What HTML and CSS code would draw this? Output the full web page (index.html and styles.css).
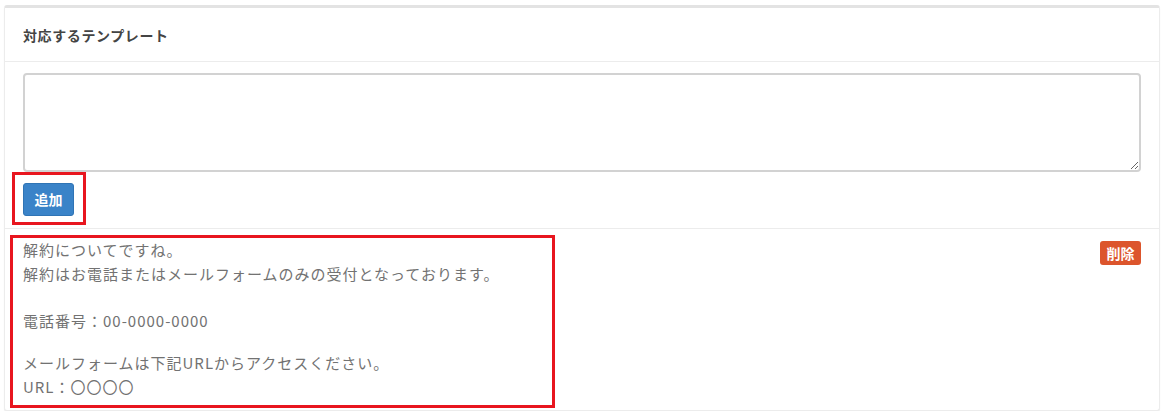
FILE: index.html
```html
<!DOCTYPE html>
<html lang="ja">
<head>
<meta charset="utf-8">
<title>対応するテンプレート</title>
<link rel="stylesheet" href="styles.css">
</head>
<body>
<div class="box">
  <div class="box-header">
    <h3 class="box-title">対応するテンプレート</h3>
  </div>
  <div class="box-body">
    <textarea class="template-input"></textarea>
    <div class="mark add-mark">
      <button class="btn-add" type="button">追加</button>
    </div>
  </div>
  <div class="item-row">
    <div class="mark item-mark">
      <div class="line">解約についてですね。</div>
      <div class="line">解約はお電話またはメールフォームのみの受付となっております。</div>
      <div class="gap gap-a"></div>
      <div class="line">電話番号：00-0000-0000</div>
      <div class="gap gap-b"></div>
      <div class="line">メールフォームは下記URLからアクセスください。</div>
      <div class="line">URL：〇〇〇〇</div>
    </div>
    <span class="btn-delete">削除</span>
  </div>
</div>
</body>
</html>
```

FILE: styles.css
```css
* { box-sizing: border-box; }

html, body {
  margin: 0;
  background: #ffffff;
}

body {
  padding: 5px 5px 0 4px;
  font-family: "Noto Sans CJK JP", "Noto Sans", sans-serif;
  color: #444;
}

.box {
  background: #fff;
  border: 1px solid #ececec;
  border-top: 3px solid #e3e3e3;
  border-radius: 3px;
  box-shadow: 0 1px 1px rgba(0, 0, 0, 0.08);
  height: 406px;
}

.box-header {
  height: 54px;
  padding: 0 18px;
  display: flex;
  align-items: center;
  border-bottom: 1px solid #ececec;
}

.box-title {
  margin: 0;
  font-size: 14px;
  font-weight: 700;
  color: #444;
  letter-spacing: 0.6px;
}

.box-body {
  padding: 11px 18px 3px 18px;
  border-bottom: 1px solid #ececec;
}

.template-input {
  display: block;
  width: 100%;
  height: 99px;
  margin: 0;
  border: 2px solid #d2d2d2;
  border-radius: 4px;
  resize: vertical;
  background: #fff;
  font-family: inherit;
}

.mark {
  border: 3px solid #e8161f;
}

.add-mark {
  width: 74px;
  height: 53px;
  margin-left: -11px;
  padding: 8px 0 0 8px;
}

.btn-add {
  display: block;
  width: 51px;
  height: 33px;
  margin: 0;
  padding: 0;
  border: 1px solid #2f74b5;
  border-radius: 3px;
  background: #3a83c8;
  color: #fff;
  font-family: inherit;
  font-size: 14px;
  font-weight: 700;
  line-height: 31px;
  text-align: center;
}

.item-row {
  display: flex;
  justify-content: space-between;
  align-items: flex-start;
  padding: 6px 18px 0 5px;
}

.item-mark {
  width: 545px;
  height: 173px;
  padding: 0 0 0 10px;
  font-size: 15px;
  letter-spacing: 1px;
  color: #727272;
}

.line {
  height: 24px;
  line-height: 24px;
  white-space: nowrap;
}

.gap-a { height: 23px; }
.gap-b { height: 18px; }

.btn-delete {
  display: inline-block;
  margin-top: 6px;
  width: 41px;
  height: 24px;
  line-height: 24px;
  border-radius: 3px;
  background: #dc552c;
  color: #fff;
  font-size: 14px;
  font-weight: 700;
  text-align: center;
}
```
